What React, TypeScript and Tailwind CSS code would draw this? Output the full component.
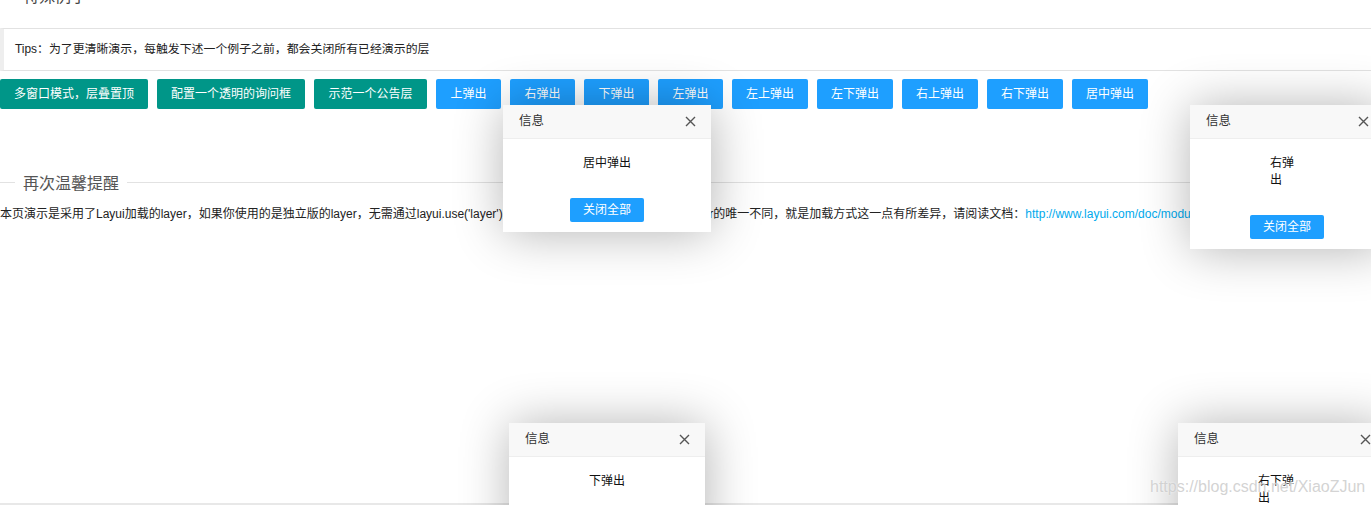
const tealBtns = [
  { label: '多窗口模式，层叠置顶', w: 'w-[148px]' },
  { label: '配置一个透明的询问框', w: 'w-[148px]' },
  { label: '示范一个公告层', w: 'w-[113px]' },
]

const blueBtns = [
  { label: '上弹出', w: 'w-[65px]' },
  { label: '右弹出', w: 'w-[65px]' },
  { label: '下弹出', w: 'w-[65px]' },
  { label: '左弹出', w: 'w-[65px]' },
  { label: '左上弹出', w: 'w-[76px]' },
  { label: '左下弹出', w: 'w-[76px]' },
  { label: '右上弹出', w: 'w-[76px]' },
  { label: '右下弹出', w: 'w-[76px]' },
  { label: '居中弹出', w: 'w-[76px]' },
]

const CloseIcon = () => (
  <svg width="11" height="11" viewBox="0 0 11 11" className="shrink-0">
    <path d="M1 1 L10 10 M10 1 L1 10" stroke="#555" strokeWidth="1.4" fill="none" />
  </svg>
)

type LayerProps = {
  pos: string
  text: string
  textWidth?: string
  showBtn?: boolean
}

const Layer = ({ pos, text, textWidth, showBtn = true }: LayerProps) => {
  return (
    <div className={`absolute ${pos} bg-white shadow-[1px_1px_50px_rgba(0,0,0,0.3)]`}>
      <div className="h-[34px] bg-[#f8f8f8] border-b border-[#eee] pl-[16px] pr-[15px] flex items-center justify-between">
        <span className="text-[12.5px] text-[#333]">信息</span>
        <CloseIcon />
      </div>
      <div className="px-[80px] pt-[16px] pb-[15px] text-[12px] leading-[17px] text-[#111]">
        <div className={textWidth ?? ''}>{text}</div>
      </div>
      {showBtn && (
        <div className="flex justify-center pt-[11px] pb-[10px]">
          <div className="w-[74px] h-[24px] rounded-[2px] bg-[#1e9fff] text-white text-[12px] flex items-center justify-center">
            关闭全部
          </div>
        </div>
      )}
    </div>
  )
}

export default function App() {
  return (
    <div className="relative w-[1371px] h-[505px] overflow-hidden bg-white text-[#333] font-['Liberation_Sans','Noto_Sans_CJK_SC',sans-serif]">
      {/* 特殊例子 legend, mostly scrolled out of view */}
      <div className="h-[28px] overflow-hidden">
        <div className="pl-[23px] -mt-[13px] text-[16px] leading-[20px] text-[#444]">特殊例子</div>
      </div>

      <div className="w-[1400px] h-[43px] border-y border-[#e2e2e2] border-l-[4px] border-l-[#eee] pl-[11px] flex items-center text-[11.9px] text-[#222]">
        Tips：为了更清晰演示，每触发下述一个例子之前，都会关闭所有已经演示的层
      </div>

      <div className="mt-[8px] flex gap-[9px]">
        {tealBtns.map((b) => (
          <div key={b.label} className={`${b.w} h-[30px] shrink-0 rounded-[2px] bg-[#009688] text-white text-[12px] flex items-center justify-center`}>
            {b.label}
          </div>
        ))}
        {blueBtns.map((b) => (
          <div key={b.label} className={`${b.w} h-[30px] shrink-0 rounded-[2px] bg-[#1e9fff] text-white text-[12px] flex items-center justify-center`}>
            {b.label}
          </div>
        ))}
      </div>

      <div className="mt-[63px] h-[20px] flex items-center">
        <div className="w-[15px] h-px bg-[#e2e2e2]" />
        <span className="px-[8px] text-[16px] leading-[20px] text-[#555] mt-[3px]">再次温馨提醒</span>
        <div className="flex-1 h-px bg-[#e2e2e2]" />
      </div>

      <p className="mt-[13px] whitespace-nowrap text-[12px] leading-[18px] text-[#222]">
        本页演示是采用了Layui加载的layer，如果你使用的是独立版的layer，无需通过layui.use('layer')加载，直接引入即可。Layui加载的layer的唯一不同，就是加载方式这一点有所差异，请阅读文档：
        <span className="text-[#01aaed]">http://www.layui.com/doc/modules/layer.html#use</span>
      </p>

      <div className="absolute left-0 right-0 top-[503px] h-[2px] bg-[#e8e8e8]" />

      <Layer pos="left-[503px] top-[105px] w-[208px]" text="居中弹出" />
      <Layer pos="left-[1190px] top-[105px] w-[194px]" text="右弹出" textWidth="w-[28px]" />
      <Layer pos="left-[509px] top-[423px] w-[196px]" text="下弹出" />
      <Layer pos="left-[1178px] top-[423px] w-[208px]" text="右下弹出" textWidth="w-[40px]" />

      <div className="absolute left-[1150px] top-[476px] text-[16px] leading-[22px] text-[#c8c8c8]/80 font-['Liberation_Sans',sans-serif] [text-shadow:0_0_2px_rgba(255,255,255,0.9)]">
        https://blog.csdn.net/XiaoZJun
      </div>
    </div>
  )
}
